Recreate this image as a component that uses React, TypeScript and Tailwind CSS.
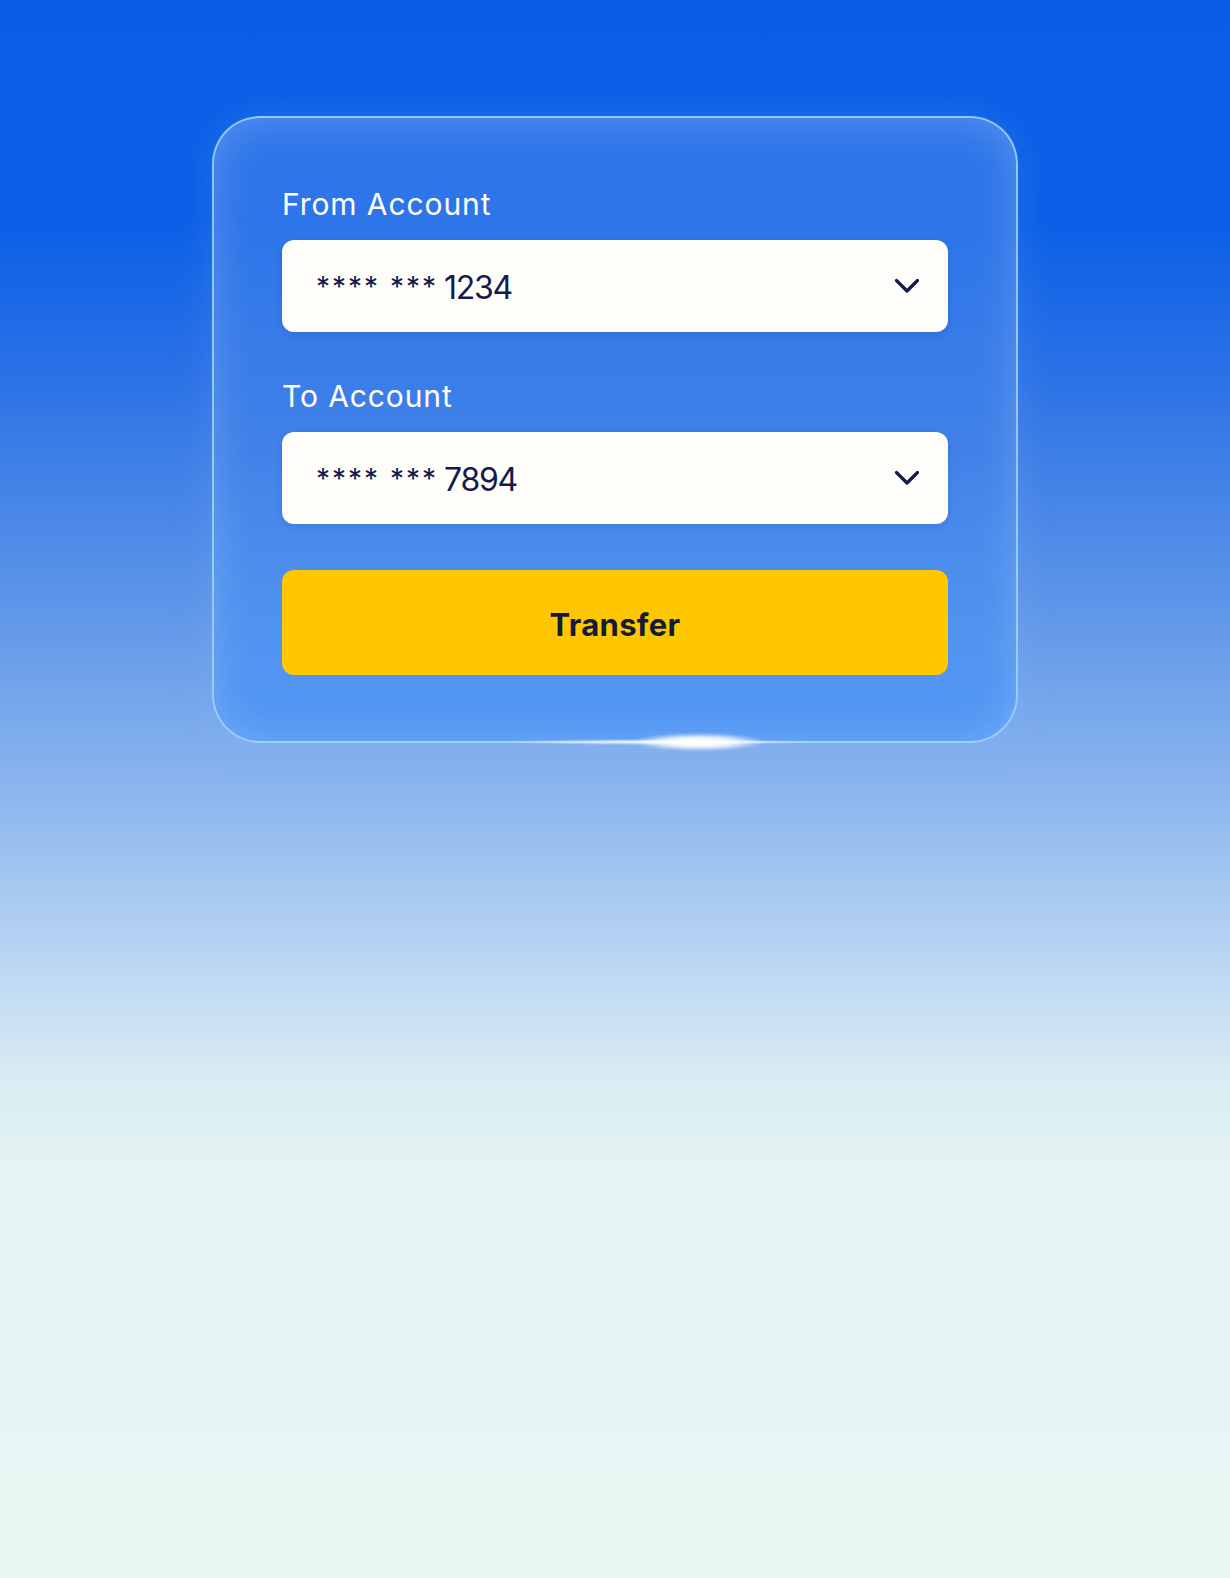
function Chevron() {
	return (
		<svg width="26" height="16" viewBox="0 0 26 16" fill="none" className="text-[#121a4f]">
			<path d="M2.5 2.5 L13 13 L23.5 2.5" stroke="currentColor" strokeWidth="3.2" strokeLinecap="round" strokeLinejoin="round" />
		</svg>
	);
}

function AccountSelect({ label, mask, last }: { label: string; mask: string; last: string }) {
	return (
		<div className="flex flex-col gap-[18px]">
			<label className="text-[30px] leading-[36px] text-white tracking-[0.9px]">{label}</label>
			<div className="h-[92px] rounded-[12px] bg-[#fffdf9] flex items-center justify-between pl-[34px] pr-[28px] shadow-[0_2px_6px_rgba(20,40,120,0.15)]">
				<div className="flex items-baseline gap-[6px] text-[#121a4f] pt-[4px]">
					<span className="relative top-[-2px] text-[28px] tracking-[2px]">{mask}</span>
					<span className="text-[32px] tracking-[-1.3px]">{last}</span>
				</div>
				<Chevron />
			</div>
		</div>
	);
}

export default function App() {
	return (
		<div
			className="min-h-[1578px] w-full bg-[linear-gradient(to_bottom,#0a5ee6_0%,#0b5fe6_14%,#2c72e6_24%,#5c95e8_38%,#8fb8ef_51%,#b6d3f2_60%,#d9ebf3_68%,#e4f4f3_74%,#e8f6f3_100%)] pt-[116px] flex flex-col items-center"
			style={{ fontFamily: "Inter, 'Noto Sans', sans-serif" }}
		>
			<div className="relative w-[806px] flex flex-col gap-[46px] rounded-[48px] border-2 border-[#a6dcff]/80 bg-[linear-gradient(to_bottom,rgba(120,165,240,0.35),rgba(70,135,235,0.45)_55%,rgba(70,145,245,0.8))] shadow-[inset_0_0_40px_rgba(255,255,255,0.2),0_0_40px_rgba(150,190,255,0.18)] px-[68px] pt-[68px] pb-[66px]">
				<AccountSelect label="From Account" mask="**** ***" last="1234" />
				<AccountSelect label="To Account" mask="**** ***" last="7894" />
				<button className="w-full h-[105px] rounded-[12px] bg-[#ffc700] text-[31px] font-bold text-[#141b33] tracking-[0.3px] pt-[5px]">
					Transfer
				</button>
				<div className="absolute left-[300px] bottom-[-4px] w-[290px] h-[6px] rounded-full bg-[radial-gradient(ellipse_at_center,rgba(255,255,255,0.9)_0%,rgba(255,255,255,0.4)_45%,rgba(255,255,255,0)_75%)]" />
				<div className="absolute left-[420px] bottom-[-10px] w-[130px] h-[18px] rounded-full bg-[radial-gradient(ellipse_at_center,rgba(255,255,255,1)_0%,rgba(255,255,255,0.9)_35%,rgba(255,255,255,0)_72%)] blur-[1px]" />
			</div>
		</div>
	);
}
